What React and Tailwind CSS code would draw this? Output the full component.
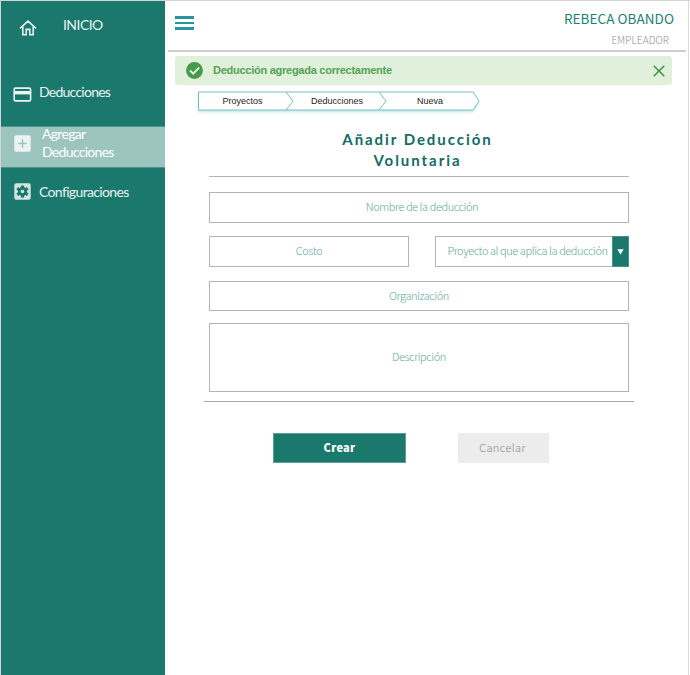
import React from "react";

const field =
  "flex items-center justify-center border border-[#b4b4b4] bg-white pb-[3px] text-[11px] leading-4 font-light tracking-[-0.43px] text-[#62a99d] font-['Noto_Sans_CJK_SC',sans-serif]";

function HomeIcon() {
  return (
    <svg className="h-[16px] w-[18px]" viewBox="0 0 18 16" fill="none" stroke="#e6f1ef" strokeWidth="1.6">
      <path d="M1 8.4 9 1.2l8 7.2M3.8 6.4v8.4h3.4V9.4h3.6v5.4h3.4V6.4" />
    </svg>
  );
}

function CardIcon() {
  return (
    <svg className="h-[15px] w-[19px]" viewBox="0 0 19 15">
      <rect x="1.2" y="1.1" width="16.4" height="12.8" rx="1.4" fill="none" stroke="#edf5f3" strokeWidth="1.6" />
      <path d="M1 4h17v3.4H1z" fill="#edf5f3" />
    </svg>
  );
}

function PlusIcon() {
  return (
    <svg className="h-[17px] w-[17px]" viewBox="0 0 17 17">
      <rect x=".3" y=".3" width="16.4" height="16.4" rx="1.8" fill="#ecf3f1" />
      <path d="M8.5 4.2v8.6M4.2 8.5h8.6" stroke="#9dc5bf" strokeWidth="1.5" />
    </svg>
  );
}

function GearIcon() {
  return (
    <svg className="h-[17px] w-[17px]" viewBox="0 0 17 17">
      <rect x=".3" y=".3" width="16.4" height="16.4" rx="1.8" fill="#d5e4e1" />
      <g stroke="#1b786c" strokeWidth="3.2">
        <path d="M8.5 2.4v12.2M3.2 5.45l10.6 6.1M13.8 5.45l-10.6 6.1" />
      </g>
      <circle cx="8.5" cy="8.5" r="4.5" fill="#1b786c" />
      <circle cx="8.5" cy="8.5" r="1.8" fill="#d5e4e1" />
    </svg>
  );
}

function Sidebar() {
  return (
    <aside className="flex w-[164px] shrink-0 flex-col bg-[#1b786c] text-[14px] leading-[18px] text-[#e9f3f1] font-['Lato',sans-serif]">
      <div className="mt-[15px] flex h-[20px] items-start pl-[18px]">
        <span className="mt-[4px]"><HomeIcon /></span>
        <span className="ml-[26px] tracking-[-0.55px]">INICIO</span>
      </div>
      <div className="mt-[47px] flex h-[20px] items-start pl-[12px]">
        <span className="mt-[4px]"><CardIcon /></span>
        <span className="ml-[7px] tracking-[-0.75px]">Deducciones</span>
      </div>
      <div className="mt-[23px] flex h-[42px] items-start border-y border-[#4b9389] bg-[#9dc5bf] pl-[13px] text-white">
        <span className="mt-[8px]"><PlusIcon /></span>
        <span className="ml-[11px] -mt-[2px] tracking-[-0.7px]">Agregar<br />Deducciones</span>
      </div>
      <div className="mt-[15px] flex h-[20px] items-start pl-[13px]">
        <span><GearIcon /></span>
        <span className="ml-[8px] tracking-[-0.65px]">Configuraciones</span>
      </div>
    </aside>
  );
}

function Header() {
  return (
    <header className="ml-[3px] mr-[2px] flex h-[51px] justify-between border-b-2 border-[#cfcfcf]">
      <div className="ml-[7px] mt-[15px] flex flex-col gap-[3px]">
        <i className="h-[2.5px] w-[19px] bg-[#2a969c]" />
        <i className="h-[2.5px] w-[19px] bg-[#2a969c]" />
        <i className="h-[2.5px] w-[19px] bg-[#2a969c]" />
      </div>
      <div className="flex flex-col items-end whitespace-nowrap font-['Noto_Sans_CJK_SC',sans-serif]">
        <span className="mr-[12px] mt-[8px] text-[13.5px] leading-[18px] tracking-[0.05px] text-[#1b8074]">REBECA OBANDO</span>
        <span className="mr-[17px] mt-[6px] text-[10px] leading-[14px] font-light tracking-[0.1px] text-[#909090]">EMPLEADOR</span>
      </div>
    </header>
  );
}

function Alert() {
  return (
    <div className="ml-[10px] mt-[4px] flex h-[29px] w-[497px] items-center rounded-[3px] bg-[#e1f0db] pl-[11px] pr-[7px]">
      <svg className="h-[17px] w-[17px]" viewBox="0 0 17 17">
        <circle cx="8.5" cy="8.5" r="8.4" fill="#459b48" />
        <path d="m4 8.5 3.2 3.2 6-6.2" fill="none" stroke="#eaf5e6" strokeWidth="1.9" />
      </svg>
      <span className="ml-[10px] text-[11px] font-bold tracking-[-0.26px] text-[#52a354] font-['Liberation_Sans',Arial,sans-serif]">
        Deducción agregada correctamente
      </span>
      <svg className="ml-auto h-[12px] w-[12px]" viewBox="0 0 12 12" stroke="#3f9542" strokeWidth="1.6">
        <path d="m.7.7 10.6 10.6M11.3.7.7 11.3" />
      </svg>
    </div>
  );
}

function Steps() {
  return (
    <nav className="relative ml-[33px] mt-[6px] flex h-[20px] w-[282px] items-center text-center text-[9px] leading-[12px] text-[#222] font-['Liberation_Sans',Arial,sans-serif]">
      <svg className="absolute inset-0 h-[24px] w-[286px] drop-shadow-[0_2px_1px_rgba(60,170,170,0.25)]" viewBox="0 0 286 24" fill="white" stroke="#76bfc1">
        <path d="M.5 1H275l6 9-6 9H.5z" />
        <path d="m88 1 7 9-7 9M181 1l7 9-7 9" fill="none" />
      </svg>
      <span className="relative w-[89px]">Proyectos</span>
      <span className="relative w-[100px]">Deducciones</span>
      <span className="relative w-[86px]">Nueva</span>
    </nav>
  );
}

export default function App() {
  return (
    <div className="flex h-[675px] w-[690px] overflow-hidden border-l border-t border-[#d5d5d5] bg-white">
      <Sidebar />
      <main className="mr-[1px] flex min-w-0 flex-1 flex-col border-r border-[#dadada]">
        <Header />
        <Alert />
        <Steps />
        <section className="ml-[39px] flex w-[430px] flex-col items-center">
          <h1 className="mt-[18px] h-[48px] w-[420px] border-b border-[#b4b4b4] pr-[3px] text-center text-[15px] font-bold leading-[21px] tracking-[1.95px] text-[#136b63] font-['Lato',sans-serif]">
            Añadir Deducción<br />Voluntaria
          </h1>
          <div className={field + " mt-[15px] h-[31px] w-[420px] pl-[6px]"}>Nombre de la deducción</div>
          <div className="mt-[13px] flex w-[420px] justify-between">
            <div className={field + " h-[31px] w-[200px]"}>Costo</div>
            <div className="flex h-[31px] w-[194px]">
              <div className={field + " flex-1 border-r-0 pl-[7px] whitespace-nowrap"}>Proyecto al que aplica la deducción</div>
              <div className="flex w-[17px] shrink-0 items-center justify-center border border-[#4c8f86] bg-[#1b786c]">
                <svg className="h-[6px] w-[7px]" viewBox="0 0 7 6" fill="white"><path d="M.3.2h6.4L3.5 5.6z" /></svg>
              </div>
            </div>
          </div>
          <div className={field + " mt-[14px] h-[30px] w-[420px]"}>Organización</div>
          <div className={field + " mt-[12px] h-[69px] w-[420px]"}>Descripción</div>
          <div className="mt-[9px] h-px w-[430px] bg-[#a8a8a8]" />
          <div className="mt-[31px] flex w-[430px] pl-[69px] text-[11px] font-['Noto_Sans_CJK_SC',sans-serif]">
            <button className="h-[30px] w-[133px] border border-[#5a9f95] bg-[#1b786c] pb-[2px] font-black tracking-[0.3px] text-white">Crear</button>
            <button className="ml-[52px] h-[30px] w-[91px] bg-[#ececec] pb-[2px] pr-[2px] font-light tracking-[0.4px] text-[#888]">Cancelar</button>
          </div>
        </section>
      </main>
    </div>
  );
}
